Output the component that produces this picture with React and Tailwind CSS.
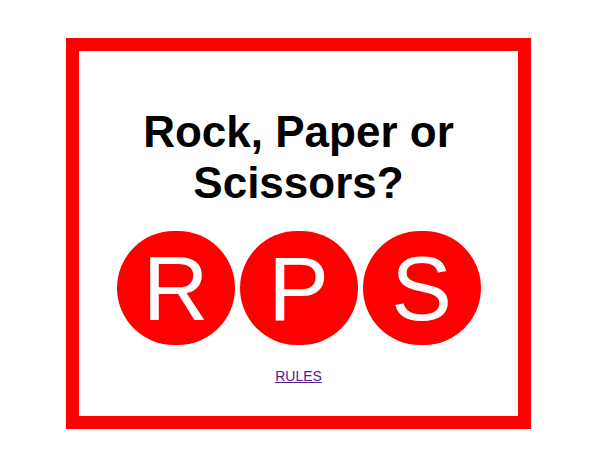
export default function App() {
  const letters = ["R", "P", "S"];
  return (
    <div className="w-[597px] h-[465px] bg-white pt-[38px] flex justify-center" style={{ fontFamily: '"Liberation Sans", Arial, sans-serif' }}>
      <div className="w-[465px] h-[391px] border-[13px] border-[#ff0000] bg-white flex flex-col items-center pt-[55px]">
        <h1 className="text-[44px] font-bold text-black text-center leading-[51px]">
          Rock, Paper or
          <br />
          Scissors?
        </h1>
        <div className="mt-[23px] flex gap-[5px]">
          {letters.map((l) => (
            <div
              key={l}
              className="w-[118px] h-[114px] rounded-full bg-[#ff0000] flex items-center justify-center text-white text-[91px] leading-none"
            >
              {l}
            </div>
          ))}
        </div>
        <a href="#" className="mt-[23px] text-[14px] leading-[16px] text-[#551a8b] underline">
          RULES
        </a>
      </div>
    </div>
  );
}
